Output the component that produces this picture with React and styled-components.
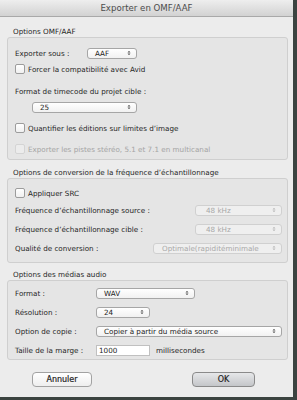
import React from "react";
import styled, { createGlobalStyle } from "styled-components";

const GlobalStyle = createGlobalStyle`
  html, body {
    margin: 0;
    padding: 0;
    background: #3b4340;
  }
  body {
    font-family: "DejaVu Sans", "Liberation Sans", sans-serif;
    font-size: 7.2px;
    color: #262626;
  }
`;

const Window = styled.div`
  width: 293px;
  height: 397px;
  background: #ececec;
  display: flex;
  flex-direction: column;
  box-sizing: border-box;
`;

const TitleBar = styled.div`
  height: 17px;
  flex: none;
  background: linear-gradient(#eeeeee, #d2d2d2);
  border-bottom: 1px solid #a9a9a9;
  box-sizing: border-box;
  display: flex;
  align-items: center;
  justify-content: center;
  font-size: 8.6px;
  color: #4c4c4c;
`;

const Content = styled.div`
  padding: 0 5px 0 7px;
  display: flex;
  flex-direction: column;
`;

const SectionLabel = styled.div`
  height: 11px;
  line-height: 11px;
  padding-left: 6px;
  margin-top: ${({ top }) => top}px;
`;

const Group = styled.div`
  background: #e5e5e5;
  border: 1px solid #cfcfcf;
  border-radius: 3px;
  padding: ${({ pad }) => pad};
  display: flex;
  flex-direction: column;
`;

const Row = styled.div`
  height: 16px;
  display: flex;
  align-items: center;
  justify-content: ${({ spread }) => (spread ? "space-between" : "flex-start")};
  margin-top: ${({ top }) => top || 0}px;
  padding-left: ${({ indent }) => indent || 0}px;
  color: ${({ disabled }) => (disabled ? "#a4a4a4" : "inherit")};
`;

const Label = styled.span`
  width: ${({ w }) => (w ? `${w}px` : "auto")};
  flex: none;
  white-space: nowrap;
`;

const Box = styled.span`
  width: 10px;
  height: 10px;
  box-sizing: border-box;
  border: 1px solid ${({ disabled }) => (disabled ? "#d4d4d4" : "#9c9c9c")};
  border-radius: 2px;
  background: ${({ disabled }) =>
    disabled ? "#ececec" : "linear-gradient(#ffffff, #f0f0f0)"};
  margin-right: 3px;
  flex: none;
`;

const Popup = styled.div`
  width: ${({ w }) => w}px;
  height: 11px;
  box-sizing: border-box;
  flex: none;
  border: 1px solid ${({ disabled }) => (disabled ? "#d0d0d0" : "#a6a6a6")};
  border-radius: 3px;
  background: ${({ disabled }) =>
    disabled ? "#efefef" : "linear-gradient(#ffffff, #f1f1f1)"};
  color: ${({ disabled }) => (disabled ? "#a8a8a8" : "#222")};
  display: flex;
  align-items: center;
  justify-content: space-between;
  padding: 0 5px 0 ${({ pl }) => pl || 7}px;
  margin-left: ${({ ml }) => ml || 0}px;
  white-space: nowrap;
  overflow: hidden;
`;

const TextField = styled.div`
  width: 54px;
  height: 11px;
  box-sizing: border-box;
  background: #fff;
  border: 1px solid #c0c0c0;
  padding-left: 2px;
  display: flex;
  align-items: center;
  margin-right: 6px;
  flex: none;
`;

const Buttons = styled.div`
  display: flex;
  justify-content: space-between;
  padding: 0 33px 0 25px;
  margin-top: 12px;
`;

const Button = styled.div`
  width: ${({ w }) => w}px;
  height: 15px;
  box-sizing: border-box;
  border: 1px solid ${({ primary }) => (primary ? "#8a8a8a" : "#a2a2a2")};
  border-radius: 4px;
  background: ${({ primary }) =>
    primary
      ? "linear-gradient(#e6e7e9, #c4c6c9)"
      : "linear-gradient(#ffffff, #eeeeee)"};
  display: flex;
  align-items: center;
  justify-content: center;
  font-size: 8px;
  color: #1e1e1e;
  -webkit-text-stroke: 0.2px #1e1e1e;
`;

const Arrows = ({ disabled }) => (
  <svg width="4" height="6" viewBox="0 0 4 6">
    <path
      d="M0.5 2.4 L2 0.8 L3.5 2.4 Z M0.5 3.6 L2 5.2 L3.5 3.6 Z"
      fill={disabled ? "#b8b8b8" : "#555"}
    />
  </svg>
);

const Select = ({ children, disabled, ...rest }) => (
  <Popup disabled={disabled} {...rest}>
    <span>{children}</span>
    <Arrows disabled={disabled} />
  </Popup>
);

const Check = ({ children, disabled, top }) => (
  <Row top={top} disabled={disabled}>
    <Box disabled={disabled} />
    <Label>{children}</Label>
  </Row>
);

export default function App() {
  return (
    <>
      <GlobalStyle />
      <Window>
        <TitleBar>Exporter en OMF/AAF</TitleBar>
        <Content>
          <SectionLabel top={9}>Options OMF/AAF</SectionLabel>
          <Group pad="7px 6px 2px 7px">
            <Row>
              <Label w={72}>Exporter sous :</Label>
              <Select w={50}>AAF</Select>
            </Row>
            <Check>Forcer la compatibilité avec Avid</Check>
            <Row top={6}>
              <Label>Format de timecode du projet cible :</Label>
            </Row>
            <Row indent={17}>
              <Select w={105}>25</Select>
            </Row>
            <Check top={5}>Quantifier les éditions sur limites d’image</Check>
            <Check top={5} disabled>
              Exporter les pistes stéréo, 5.1 et 7.1 en multicanal
            </Check>
          </Group>

          <SectionLabel top={7}>
            Options de conversion de la fréquence d’échantillonnage
          </SectionLabel>
          <Group pad="6px 5px 6px 7px">
            <Check>Appliquer SRC</Check>
            <Row spread top={1}>
              <Label>Fréquence d’échantillonnage source :</Label>
              <Select w={87} pl={10} disabled>
                48 kHz
              </Select>
            </Row>
            <Row spread top={3}>
              <Label>Fréquence d’échantillonnage cible :</Label>
              <Select w={87} pl={10} disabled>
                48 kHz
              </Select>
            </Row>
            <Row spread top={3}>
              <Label>Qualité de conversion :</Label>
              <Select w={129} pl={8} disabled>
                Optimale(rapiditéminimale
              </Select>
            </Row>
          </Group>

          <SectionLabel top={6}>Options des médias audio</SectionLabel>
          <Group pad="4px 5px 1px 7px">
            <Row>
              <Label w={81}>Format :</Label>
              <Select w={99}>WAV</Select>
            </Row>
            <Row top={3}>
              <Label w={81}>Résolution :</Label>
              <Select w={54}>24</Select>
            </Row>
            <Row top={3}>
              <Label w={81}>Option de copie :</Label>
              <Select w={186}>Copier à partir du média source</Select>
            </Row>
            <Row top={3}>
              <Label w={81}>Taille de la marge :</Label>
              <TextField>1000</TextField>
              <Label>millisecondes</Label>
            </Row>
          </Group>

          <Buttons>
            <Button w={60}>Annuler</Button>
            <Button w={63} primary>
              OK
            </Button>
          </Buttons>
        </Content>
      </Window>
    </>
  );
}
